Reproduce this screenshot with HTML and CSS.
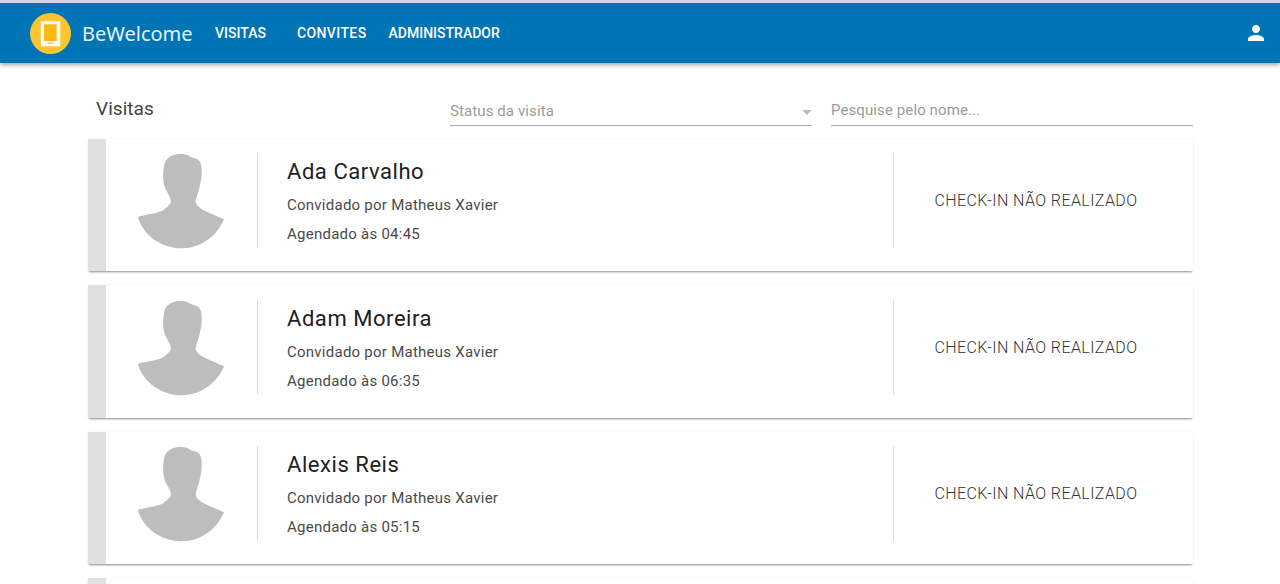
FILE: index.html
```html
<!DOCTYPE html>
<html lang="pt">
<head>
<meta charset="utf-8">
<title>BeWelcome</title>
<link rel="stylesheet" href="styles.css">
</head>
<body>
<header class="appbar">
  <div class="logo">
    <svg class="logo-svg" viewBox="0 0 40 40" width="41" height="41">
      <circle cx="20" cy="20" r="20" fill="#fdc62f"/>
      <rect x="10.500" y="8" width="19" height="24.500" rx="1" fill="#fff"/>
      <rect x="13.500" y="11" width="12.500" height="16.300" fill="#fdb813"/>
      <rect x="17" y="28.800" width="6" height="1.300" fill="#fdc62f"/>
    </svg>
    <span class="brand">BeWelcome</span>
  </div>
  <nav class="nav">
    <a class="nav-link nav-first">VISITAS</a>
    <a class="nav-link nav-second">CONVITES</a>
    <a class="nav-link">ADMINISTRADOR</a>
  </nav>
  <svg class="user-icon" viewBox="0 0 24 24" width="24" height="24"><path fill="#fff" d="M12 12c2.210 0 4-1.790 4-4s-1.790-4-4-4-4 1.790-4 4 1.790 4 4 4zm0 2c-2.670 0-8 1.340-8 4v2h16v-2c0-2.660-5.330-4-8-4z"/></svg>
</header>
<main class="content">
  <div class="toolbar">
    <h1 class="title">Visitas</h1>
    <div class="field select-field">
      <span class="placeholder">Status da visita</span>
      <span class="caret"></span>
    </div>
    <div class="field search-field">
      <span class="placeholder">Pesquise pelo nome...</span>
    </div>
  </div>
  <article class="card">
    <div class="stripe"></div>
    <div class="avatar"><svg class="avatar-svg" viewBox="0 0 88 96" width="88" height="96"><use href="#bust"/></svg></div>
    <div class="info">
      <h2 class="name">Ada Carvalho</h2>
      <p class="line">Convidado por Matheus Xavier</p>
      <p class="line">Agendado às 04:45</p>
    </div>
    <div class="status">CHECK-IN NÃO REALIZADO</div>
  </article>
  <article class="card">
    <div class="stripe"></div>
    <div class="avatar"><svg class="avatar-svg" viewBox="0 0 88 96" width="88" height="96"><use href="#bust"/></svg></div>
    <div class="info">
      <h2 class="name">Adam Moreira</h2>
      <p class="line">Convidado por Matheus Xavier</p>
      <p class="line">Agendado às 06:35</p>
    </div>
    <div class="status">CHECK-IN NÃO REALIZADO</div>
  </article>
  <article class="card">
    <div class="stripe"></div>
    <div class="avatar"><svg class="avatar-svg" viewBox="0 0 88 96" width="88" height="96"><use href="#bust"/></svg></div>
    <div class="info">
      <h2 class="name">Alexis Reis</h2>
      <p class="line">Convidado por Matheus Xavier</p>
      <p class="line">Agendado às 05:15</p>
    </div>
    <div class="status">CHECK-IN NÃO REALIZADO</div>
  </article>
  <article class="card">
    <div class="stripe"></div>
  </article>
</main>
<svg class="defs" width="0" height="0"><defs>
  <path id="bust" fill="#bdbdbd" d="M43 1C34 1 27.500 6 27 13.700C26 18 26 23 26.300 27C26.800 31 27.500 34 29 37C30.500 40 33 43 33.700 47C34 49 33.500 50.500 33 51C30 54 28 56.500 24.700 58C18 61 9 61.500 2.500 63.300C1.300 63.800 1 64.300 1.300 65.500C7 83 25 95.300 44.700 95.300C64 95.300 80 83 87 66.300C80 63 72 60 66.300 57C63 55 60 53 58.700 49.700C58.500 48 59 46 59.700 43.700C61 40 62.300 36 63 32C64 28 64.800 24 64.700 20C64.900 16 64.500 11 62.500 8C60 5 55 5 52 3C50 1.500 47 1 43 1Z"/>
</defs></svg>
</body>
</html>
```

FILE: styles.css
```css
* { box-sizing: border-box; }
html, body { margin: 0; height: 584px; overflow: hidden; }
body {
  background: #fff;
  border-top: 3px solid #d6d6d6;
  font-family: Roboto, "Liberation Sans", sans-serif;
  color: #212121;
}
.appbar {
  height: 60px;
  background: #0174b6;
  display: flex;
  align-items: center;
  padding: 0 12px 0 30px;
  box-shadow: 0 2px 4px rgba(0,0,0,.35);
  position: relative;
}
.logo { display: flex; align-items: center; }
.logo-svg { display: block; }
.brand {
  margin-left: 11px;
  font-family: "Noto Sans", sans-serif;
  font-size: 20px;
  color: #e8f2f8;
  width: 111px;
}
.nav { display: flex; margin-left: 22px; margin-top: 0; }
.nav-link { font-size: 14px; font-weight: 500; color: #fff; text-transform: uppercase; }
.nav-first { margin-right: 31px; }
.nav-second { margin-right: 22px; letter-spacing: .4px; }
.user-icon { margin-left: auto; margin-top: -1px; }
.content { padding: 32px 87px 0 88px; }
.toolbar { display: flex; align-items: flex-end; height: 31px; margin-bottom: 13px; }
.title { margin: 0 0 6px 8px; font-size: 19px; font-weight: 400; color: #444; width: 354px; letter-spacing: .05px; }
.field {
  height: 31px;
  border-bottom: 1px solid #aaa;
  display: flex;
  align-items: center;
  position: relative;
  font-size: 15px;
  color: #9b9b9b;
  letter-spacing: .1px;
}
.select-field { width: 362px; margin-right: 19px; padding-top: 2px; }
.search-field { width: 362px; }
.placeholder { line-height: 29px; }
.caret {
  position: absolute;
  right: 0;
  top: 15px;
  border: 5px solid transparent;
  border-top-color: #bdbdbd;
  border-bottom: 0;
}
.card {
  height: 132.400px;
  margin-bottom: 14px;
  display: flex;
  align-items: flex-start;
  background: #fff;
  box-shadow: 0 2px 2px -1px rgba(0,0,0,.45), 0 0 2px rgba(0,0,0,.05);
}
.stripe { width: 18px; align-self: stretch; background: #e0e0e0; }
.avatar {
  width: 152px;
  height: 95px;
  margin-top: 14.400px;
  padding-left: 31px;
  border-right: 1px solid #ddd;
}
.avatar-svg { display: block; }
.info {
  width: 636px;
  height: 95px;
  margin-top: 14.400px;
  padding-left: 29px;
  border-right: 1px solid #ddd;
}
.name { margin: 6px 0 11px; font-size: 22px; font-weight: 400; line-height: 26px; color: #212121; letter-spacing: .55px; }
.line { margin: 0 0 11px; font-size: 15px; line-height: 18px; color: #4a4a4a; letter-spacing: .25px; }
.status { flex: 1; align-self: center; text-align: center; font-size: 16px; font-weight: 300; color: #333; letter-spacing: .4px; padding: 1px 15px 10px 0; white-space: nowrap; }
.defs { position: absolute; }
```
